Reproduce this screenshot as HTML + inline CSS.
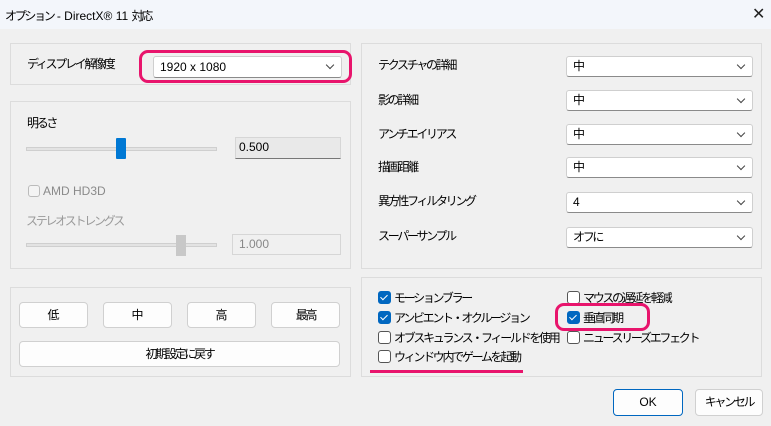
<!DOCTYPE html>
<html><head><meta charset="utf-8"><style>
*{box-sizing:border-box;margin:0;padding:0}
body{width:771px;height:426px;background:#f0f0f0;font-family:"Liberation Sans","Noto Sans CJK JP",sans-serif;font-size:12px;color:#000;position:relative;overflow:hidden}
.a{position:absolute}
.j{letter-spacing:-2.3px}
.grp{position:absolute;border:1px solid #dcdcdc}
.sel{position:absolute;background:#fff;border:1px solid #cfcfcf;border-bottom:1px solid #8a8a8a;border-radius:3px;padding-left:6px;line-height:19px;font-size:12px}
.sel:after{content:"";position:absolute;right:8px;top:5px;width:5px;height:5px;border-right:1px solid #444;border-bottom:1px solid #444;transform:rotate(45deg)}
.btn{position:absolute;background:#fdfdfd;border:1px solid #d0d0d0;border-radius:4px;text-align:center;font-size:12px}
.cb{position:absolute;width:13px;height:13px;border:1px solid #555;border-radius:3px;background:#fff}
.cb.on{background:#0067c0;border-color:#0067c0}
.cb.on:after{content:"";position:absolute;left:3px;top:1px;width:3px;height:6px;border-right:1.3px solid #fff;border-bottom:1.3px solid #fff;transform:rotate(45deg)}
.lbl{position:absolute;font-size:12px;white-space:nowrap}
</style></head><body>
<div class="a" style="left:0;top:0;width:771px;height:29px;background:#f3f6fb"></div>
<div class="lbl" style="left:5px;top:7px;font-size:12px"><span class="j">オプション</span> - DirectX® 11 <span class="j">対応</span></div>
<div class="lbl" style="left:752px;top:4px;font-size:16px;color:#222">✕</div>

<div class="grp" style="left:10px;top:43px;width:341px;height:42px"></div>
<div class="lbl j" style="left:27px;top:55px">ディスプレイ解像度</div>
<div class="a" style="left:139px;top:50px;width:213px;height:33px;border:3px solid #e8146c;border-radius:9px"></div>
<div class="sel" style="left:153px;top:56px;width:189px;height:22px;line-height:20px">1920 x 1080</div>

<div class="grp" style="left:10px;top:101px;width:341px;height:168px"></div>
<div class="lbl j" style="left:27px;top:114px">明るさ</div>
<div class="a" style="left:26px;top:147px;width:191px;height:4px;background:#e3e3e3;border:1px solid #cfcfcf"></div>
<div class="a" style="left:116px;top:138px;width:10px;height:21px;background:#0078d4;border-radius:1px"></div>
<div class="a" style="left:235px;top:137px;width:106px;height:22px;background:#e9e9e9;border:1px solid #d6d6d6;border-bottom:1px solid #777;padding-left:3px;line-height:19px">0.500</div>
<div class="a" style="left:28px;top:185px;width:12px;height:12px;border:1px solid #bbb;border-radius:3px;background:#f4f4f4"></div>
<div class="lbl" style="left:43px;top:184px;color:#8a8a8a">AMD HD3D</div>
<div class="lbl j" style="left:26px;top:212px;color:#9a9a9a">ステレオストレングス</div>
<div class="a" style="left:26px;top:243px;width:191px;height:4px;background:#e3e3e3;border:1px solid #cfcfcf"></div>
<div class="a" style="left:176px;top:235px;width:10px;height:21px;background:#c8c8c8"></div>
<div class="a" style="left:232px;top:234px;width:109px;height:21px;border:1px solid #d6d6d6;padding-left:6px;line-height:19px;color:#888">1.000</div>

<div class="grp" style="left:10px;top:287px;width:341px;height:90px"></div>
<div class="btn" style="left:19px;top:302px;width:69px;height:26px;line-height:24px">低</div>
<div class="btn" style="left:103px;top:302px;width:69px;height:26px;line-height:24px">中</div>
<div class="btn" style="left:187px;top:302px;width:69px;height:26px;line-height:24px">高</div>
<div class="btn j" style="left:271px;top:302px;width:69px;height:26px;line-height:24px">最高</div>
<div class="btn j" style="left:19px;top:341px;width:321px;height:26px;line-height:24px">初期設定に戻す</div>

<div class="grp" style="left:361px;top:43px;width:401px;height:226px"></div>
<div class="lbl j" style="left:378px;top:56px">テクスチャの詳細</div>
<div class="sel" style="left:566px;top:56px;width:187px;height:21px">中</div>
<div class="lbl j" style="left:378px;top:91px">影の詳細</div>
<div class="sel" style="left:566px;top:90px;width:187px;height:21px">中</div>
<div class="lbl j" style="left:378px;top:125px">アンチエイリアス</div>
<div class="sel" style="left:566px;top:124px;width:187px;height:21px">中</div>
<div class="lbl j" style="left:378px;top:158px">描画距離</div>
<div class="sel" style="left:566px;top:157px;width:187px;height:21px">中</div>
<div class="lbl j" style="left:378px;top:192px">異方性フィルタリング</div>
<div class="sel" style="left:566px;top:192px;width:187px;height:21px">4</div>
<div class="lbl j" style="left:378px;top:227px">スーパーサンプル</div>
<div class="sel j" style="left:566px;top:227px;width:187px;height:21px">オフに</div>

<div class="grp" style="left:361px;top:277px;width:401px;height:100px"></div>
<div class="cb on" style="left:378px;top:291px"></div><div class="lbl j" style="left:394px;top:289px">モーションブラー</div>
<div class="cb on" style="left:378px;top:311px"></div><div class="lbl j" style="left:394px;top:309px">アンビエント・オクルージョン</div>
<div class="cb" style="left:378px;top:331px"></div><div class="lbl j" style="left:394px;top:329px">オブスキュランス・フィールドを使用</div>
<div class="cb" style="left:378px;top:350px"></div><div class="lbl j" style="left:394px;top:348px">ウィンドウ内でゲームを起動</div>
<div class="a" style="left:370px;top:370px;width:153px;height:3px;background:#e8146c"></div>
<div class="cb" style="left:567px;top:291px"></div><div class="lbl j" style="left:583px;top:289px">マウスの遅延を軽減</div>
<div class="a" style="left:555px;top:303px;width:95px;height:28px;border:3px solid #e8146c;border-radius:9px"></div>
<div class="cb on" style="left:567px;top:311px"></div><div class="lbl j" style="left:583px;top:309px">垂直同期</div>
<div class="cb" style="left:567px;top:331px"></div><div class="lbl j" style="left:583px;top:329px">ニュースリーズエフェクト</div>

<div class="btn" style="left:613px;top:389px;width:70px;height:27px;line-height:25px;border:1px solid #0067c0">OK</div>
<div class="btn j" style="left:695px;top:389px;width:68px;height:27px;line-height:25px">キャンセル</div>
</body></html>
